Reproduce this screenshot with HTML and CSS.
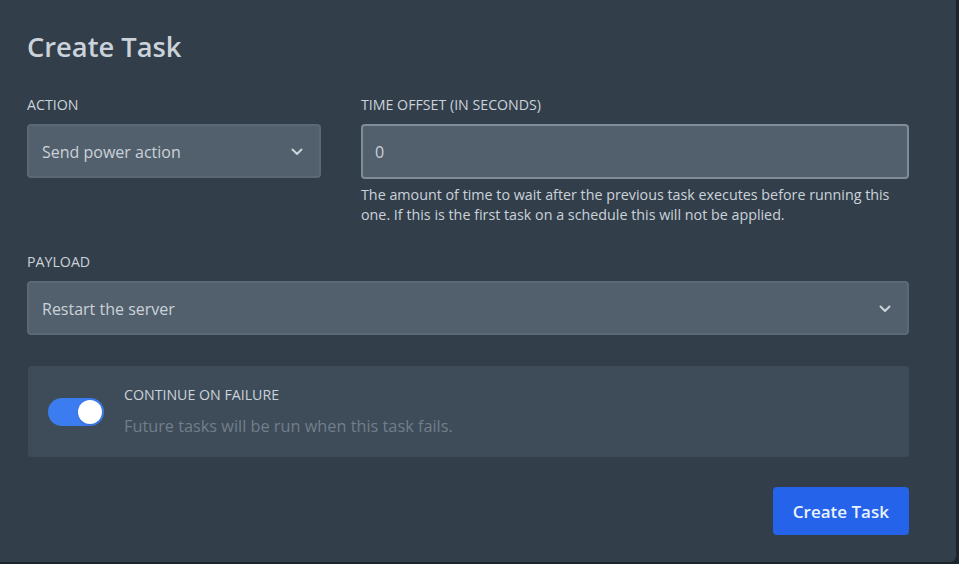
FILE: index.html
```html
<!DOCTYPE html>
<html lang="en">
<head>
<meta charset="utf-8">
<title>Create Task</title>
<link rel="stylesheet" href="styles.css">
</head>
<body>
<div class="modal">
  <h2 class="title">Create Task</h2>
  <div class="row">
    <div class="col col-action">
      <label class="label">Action</label>
      <div class="select">
        <span class="value">Send power action</span>
        <svg class="chevron" width="12" height="8" viewBox="0 0 12 8"><polyline points="1.5,1.5 6,6 10.5,1.5" fill="none" stroke="#cbd2d9" stroke-width="2" stroke-linecap="round" stroke-linejoin="round"/></svg>
      </div>
    </div>
    <div class="col col-offset">
      <label class="label">Time offset (in seconds)</label>
      <div class="input focused"><span class="value">0</span></div>
      <p class="help">The amount of time to wait after the previous task executes before running this one. If this is the first task on a schedule this will not be applied.</p>
    </div>
  </div>
  <div class="field payload">
    <label class="label">Payload</label>
    <div class="select">
      <span class="value">Restart the server</span>
      <svg class="chevron" width="12" height="8" viewBox="0 0 12 8"><polyline points="1.5,1.5 6,6 10.5,1.5" fill="none" stroke="#cbd2d9" stroke-width="2" stroke-linecap="round" stroke-linejoin="round"/></svg>
    </div>
  </div>
  <div class="failure-box">
    <div class="toggle"><span class="knob"></span></div>
    <div class="failure-text">
      <div class="failure-title">Continue on failure</div>
      <div class="failure-desc">Future tasks will be run when this task fails.</div>
    </div>
  </div>
  <div class="actions">
    <button class="btn">Create Task</button>
  </div>
</div>
</body>
</html>
```
FILE: styles.css
```css
* { box-sizing: border-box; }
html, body { margin: 0; padding: 0; }
body {
  background: #1c242c;
  width: 959px;
  height: 564px;
  overflow: hidden;
  font-family: "Open Sans", "Segoe UI", sans-serif;
  color: #cbd2d9;
}
.modal {
  width: 956px;
  height: 562px;
  background: #323f4b;
  border-radius: 0 0 6px 0;
  padding: 29px 47px 0 27px;
}
.title {
  margin: 0;
  font-family: "Open Sans", sans-serif;
  font-weight: 600;
  font-size: 27.3px;
  line-height: 36px;
  color: #cbd2d9;
}
.row {
  display: grid;
  grid-template-columns: 1fr 2fr;
  margin-top: 30px;
}
.col-offset { padding-left: 40px; }
.label {
  display: block;
  font-size: 14.2px;
  line-height: 20px;
  text-transform: uppercase;
  color: #cbd2d9;
  margin-bottom: 9px;
}
.select, .input {
  height: 54px;
  background: #52606d;
  border: 2px solid #5b6976;
  border-radius: 4px;
  display: flex;
  align-items: center;
  justify-content: space-between;
  padding: 1px 16px 0 13px;
  font-size: 16px;
  color: #cbd2d9;
}
.input { padding-left: 12px; }
.input.focused { border-color: #7f8c99; height: 55px; }
.chevron { display: block; }
.help {
  margin: 6px 0 0;
  font-size: 14.3px;
  line-height: 20px;
  color: #cbd2d9;
}
.payload { margin-top: 27px; }
.failure-box {
  margin-top: 31px;
  margin-left: 1px;
  height: 91px;
  background: #3e4c59;
  border-radius: 4px;
  display: flex;
  align-items: center;
  gap: 20px;
  padding: 0 20px;
}
.toggle {
  width: 56px;
  height: 28px;
  border-radius: 14px;
  background: #3b7cf0;
  display: flex;
  align-items: center;
  justify-content: flex-end;
  padding: 0 2px;
  flex: none;
}
.knob {
  width: 24px;
  height: 24px;
  border-radius: 50%;
  background: #ffffff;
  box-shadow: 0 1px 2px rgba(0,0,0,0.15);
}
.failure-title {
  font-size: 14.2px;
  line-height: 20px;
  text-transform: uppercase;
  color: #cbd2d9;
}
.failure-desc {
  margin-top: 8px;
  font-size: 16.3px;
  line-height: 26px;
  color: #717e8b;
}
.actions {
  display: flex;
  justify-content: flex-end;
  margin-top: 30px;
}
.btn {
  height: 48px;
  padding: 0 20px;
  border: none;
  border-radius: 4px;
  background: #2563eb;
  color: #eaf2ff;
  font-family: "Open Sans", sans-serif;
  font-weight: 600;
  font-size: 17px;
}
```
